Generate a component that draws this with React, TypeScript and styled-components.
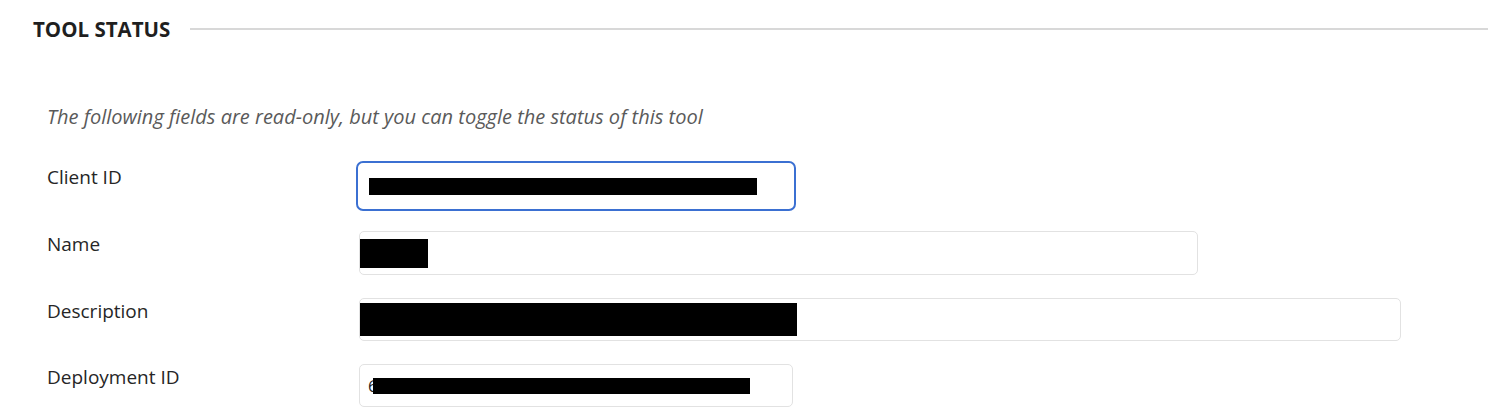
import React from 'react';
import styled, { createGlobalStyle } from 'styled-components';

const GlobalStyle = createGlobalStyle`
    html, body {
        margin: 0;
        padding: 0;
        background: #ffffff;
    }
    body {
        font-family: 'Open Sans', 'Noto Sans', sans-serif;
        color: #262626;
    }
`;

const Page = styled.div`
    width: 1488px;
    height: 418px;
    overflow: hidden;
`;

const SectionHeader = styled.div`
    display: flex;
    align-items: center;
    gap: 20px;
    padding: 15px 0 0 33px;
    height: 28px;
`;

const SectionTitle = styled.h2`
    margin: 0;
    font-size: 20.5px;
    font-weight: 700;
    line-height: 28px;
    color: #1f1f1f;
    white-space: nowrap;
`;

const Rule = styled.div`
    flex: 1;
    height: 2px;
    background: #d8d8d8;
`;

const Intro = styled.p`
    margin: 60px 0 0 47px;
    font-size: 20px;
    font-style: italic;
    line-height: 28px;
    color: #5a5a5a;
`;

const Form = styled.div`
    display: grid;
    grid-template-columns: 312px 1fr;
    row-gap: 23px;
    align-items: start;
    margin-top: 33px;
    padding-left: 47px;
`;

const Label = styled.label`
    font-size: 19px;
    line-height: 26px;
    color: #262626;
`;

const Field = styled.div<{ width: number; height: number; focused?: boolean }>`
    box-sizing: border-box;
    display: flex;
    align-items: center;
    width: ${props => props.width}px;
    height: ${props => props.height}px;
    border: ${props => (props.focused ? '2px solid #3b70d2' : '1px solid #e2e2e2')};
    border-radius: ${props => (props.focused ? '7px' : '5px')};
    margin: ${props => (props.focused ? '-3px 0 -3px -3px' : '0')};
    padding-left: ${props => (props.focused ? '11px' : '0')};
    font-size: 17px;
    color: #262626;
    background: #fff;
`;

const Redacted = styled.span<{ width: number; height: number }>`
    display: block;
    width: ${props => props.width}px;
    height: ${props => props.height}px;
    background: #000;
`;

const Lead = styled.span`
    padding-left: 8px;
    margin-right: -5px;
    line-height: 16px;
`;

const App = () => (
    <Page>
        <GlobalStyle />
        <SectionHeader>
            <SectionTitle>TOOL STATUS</SectionTitle>
            <Rule />
        </SectionHeader>
        <Intro>The following fields are read-only, but you can toggle the status of this tool</Intro>
        <Form>
            <Label>Client ID</Label>
            <Field width={440} height={50} focused>
                <Redacted width={388} height={17} />
            </Field>

            <Label>Name</Label>
            <Field width={839} height={44}>
                <Redacted width={68} height={29} />
            </Field>

            <Label>Description</Label>
            <Field width={1042} height={43}>
                <Redacted width={437} height={33} />
            </Field>

            <Label>Deployment ID</Label>
            <Field width={434} height={43}>
                <Lead>6</Lead>
                <Redacted width={377} height={16} />
            </Field>
        </Form>
    </Page>
);

export default App;
